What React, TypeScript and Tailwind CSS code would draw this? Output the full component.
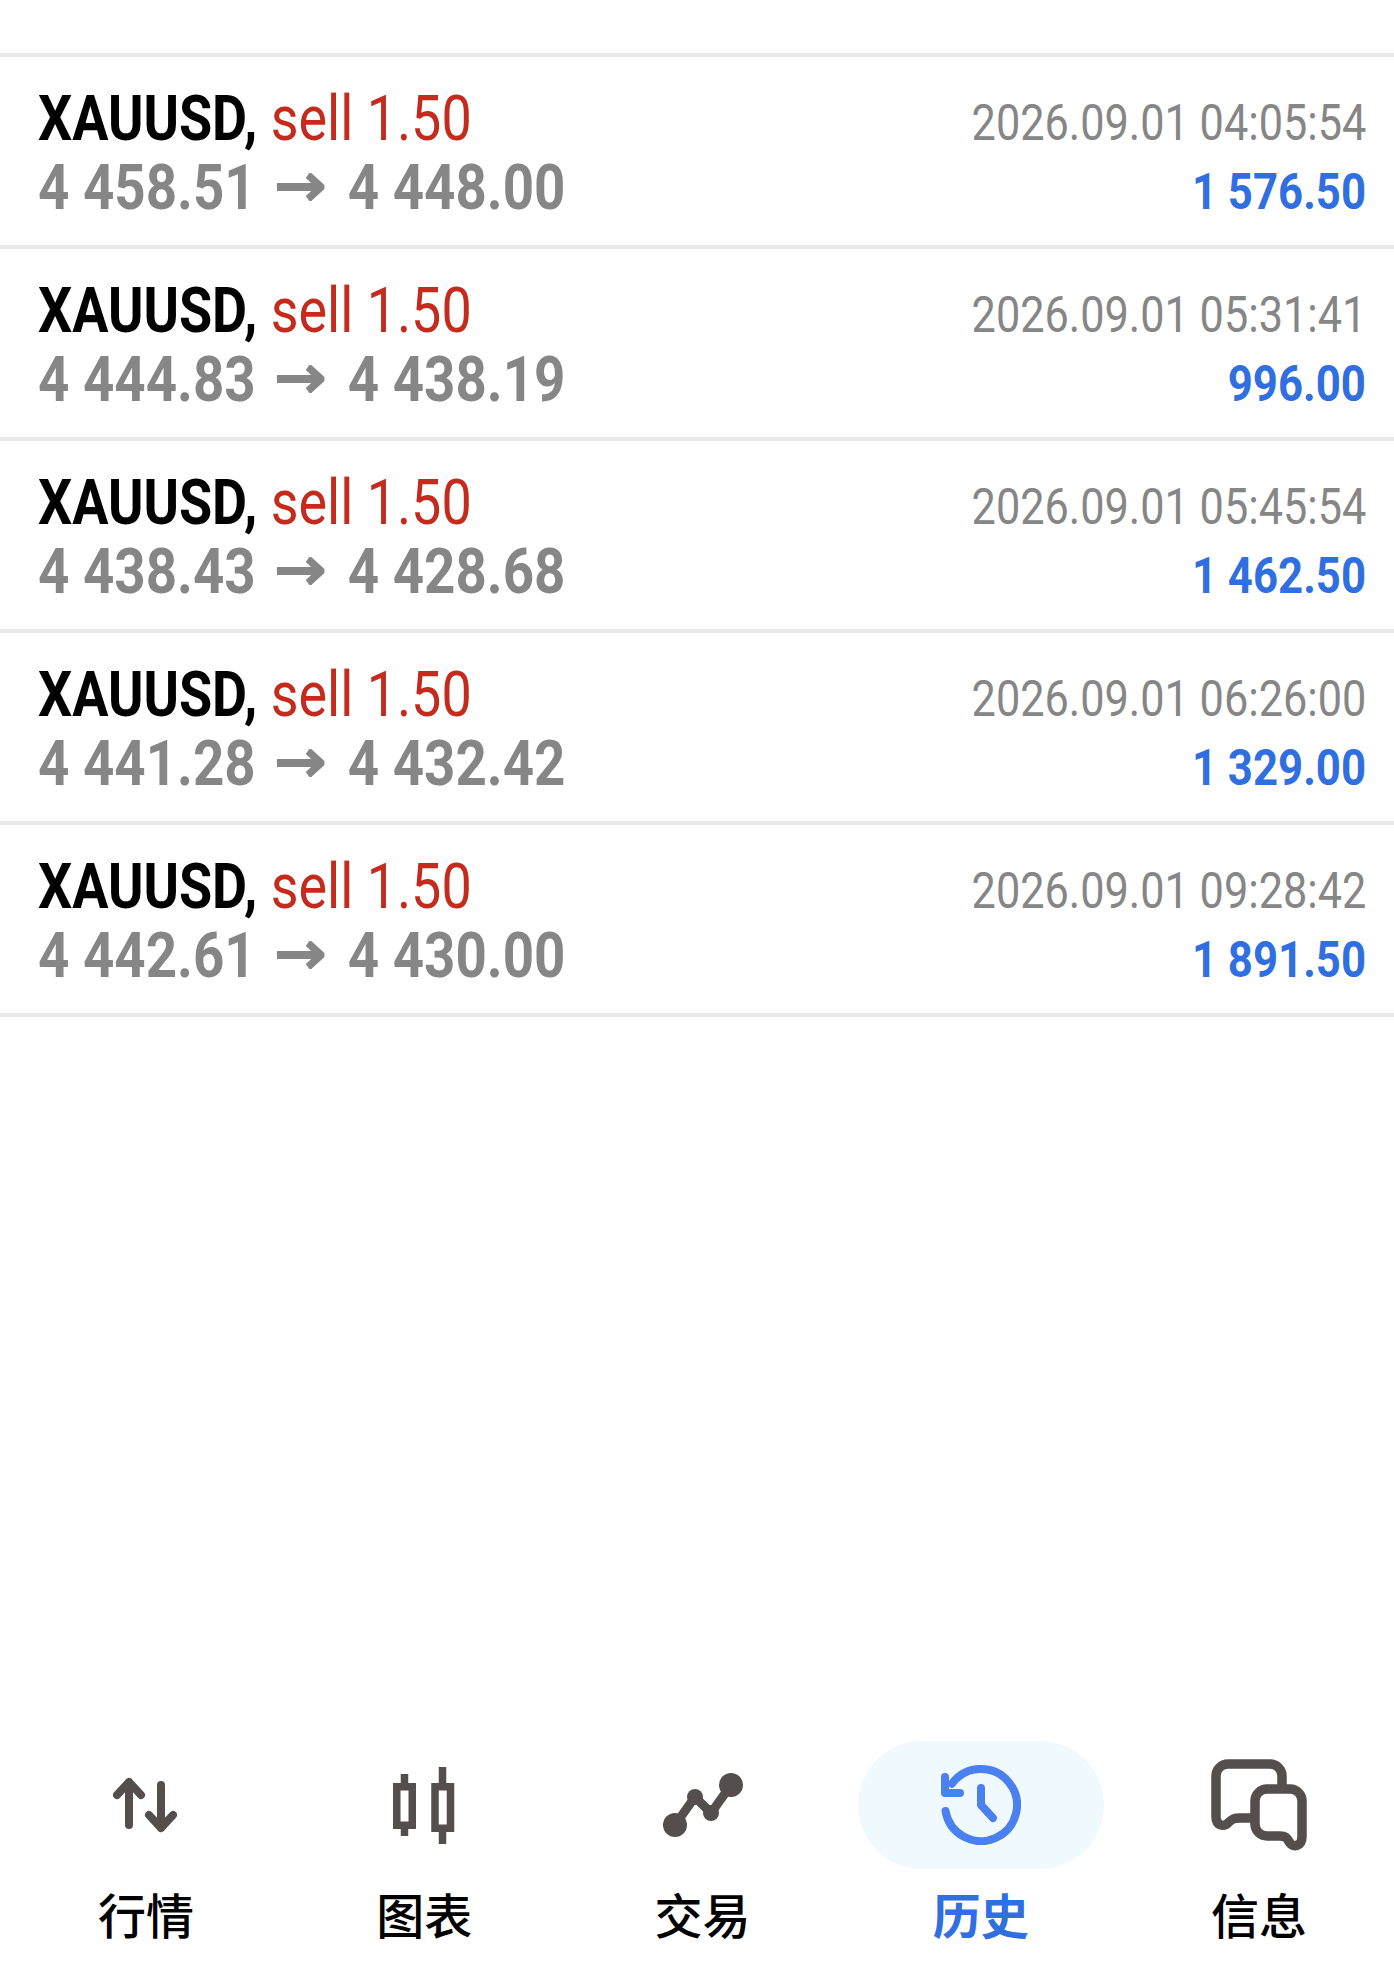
const trades = [
  { from: '4 458.51', to: '4 448.00', time: '2026.09.01 04:05:54', profit: '1 576.50' },
  { from: '4 444.83', to: '4 438.19', time: '2026.09.01 05:31:41', profit: '996.00' },
  { from: '4 438.43', to: '4 428.68', time: '2026.09.01 05:45:54', profit: '1 462.50' },
  { from: '4 441.28', to: '4 432.42', time: '2026.09.01 06:26:00', profit: '1 329.00' },
  { from: '4 442.61', to: '4 430.00', time: '2026.09.01 09:28:42', profit: '1 891.50' },
]

const ArrowGlyph = () => (
  <svg className="mr-[27px] ml-[24px] inline-block align-[8px]" width="55" height="28" viewBox="0 0 55 28" fill="none" stroke="#868686" strokeWidth="8">
    <path d="M0 14H49" />
    <path d="M36 2l15 12-15 12" />
  </svg>
)

const QuotesIcon = () => (
  <svg className="-ml-[2px]" width="64" height="56" viewBox="0 0 64 56" fill="none" stroke="#544f4d" strokeWidth="8" strokeLinecap="round" strokeLinejoin="round">
    <path d="M16 48V5M4 18L16 5l12 13" />
    <path d="M48 8v43M36 38l12 13 12-13" />
  </svg>
)

const ChartsIcon = () => (
  <svg width="62" height="77" viewBox="0 0 62 77" fill="none" stroke="#544f4d" strokeWidth="7.5">
    <path d="M11.5 7v9M11.5 62v7M49.5 0v16M49.5 65v12" />
    <rect x="3.75" y="19.75" width="15.5" height="38.5" />
    <rect x="42" y="19.75" width="15.5" height="41.5" />
  </svg>
)

const TradeIcon = () => (
  <svg className="ml-[2px]" width="80" height="64" viewBox="0 0 80 64" fill="#544f4d">
    <path d="M12 52L32 24l16 16 20-28" fill="none" stroke="#544f4d" strokeWidth="9" />
    <circle cx="12" cy="52" r="12" />
    <circle cx="32" cy="24" r="8" />
    <circle cx="48" cy="40" r="8" />
    <circle cx="68" cy="12" r="12" />
  </svg>
)

const HistoryIcon = () => (
  <svg width="80" height="80" viewBox="0 0 80 80" fill="none" stroke="#4a80f0" strokeWidth="8" strokeLinecap="round" strokeLinejoin="round">
    <path d="M11 18.7A36 36 0 1 1 4.5 46" />
    <path d="M4 12v16h15" />
    <path d="M40 23v17l12 13" />
  </svg>
)

const MessagesIcon = () => (
  <svg width="96" height="93" viewBox="0 0 96 93" fill="none" stroke="#544f4d" strokeWidth="9.5" strokeLinejoin="round">
    <path d="M71 30V17A12 12 0 0 0 59 5H17A12 12 0 0 0 5 17v41c0 9 8 10 12 6 4-4 6-5 12-5h12" />
    <path d="M56 30h23a12 12 0 0 1 12 12v36c0 9-9 11-12 6-3-4-3-7-10-7H56a12 12 0 0 1-12-12V42a12 12 0 0 1 12-12z" />
  </svg>
)

const tabs = [
  { label: '行情', icon: <QuotesIcon /> },
  { label: '图表', icon: <ChartsIcon /> },
  { label: '交易', icon: <TradeIcon /> },
  { label: '历史', icon: <HistoryIcon />, active: true },
  { label: '信息', icon: <MessagesIcon /> },
]

export default function App() {
  return (
    <div className="flex h-[1984px] flex-col overflow-hidden bg-white font-['Roboto',sans-serif]">
      <div className="mt-[53px] border-t-4 border-[#e8e8e8]">
        {trades.map((t) => (
          <div key={t.time} className="border-b-4 border-[#e8e8e8] pt-[27px] pb-[23px] pl-[38px] pr-[28px]">
            <div className="flex h-[69px] items-baseline justify-between">
              <div className="origin-left scale-x-[0.855] whitespace-nowrap text-[63px] leading-[69px]">
                <span className="font-bold text-black">XAUUSD,</span>{' '}
                <span className="text-[#c42b1c]">sell 1.50</span>
              </div>
              <div className="origin-right scale-x-[0.865] whitespace-nowrap text-[50px] leading-[69px] text-[#868686]">
                {t.time}
              </div>
            </div>
            <div className="flex h-[69px] items-baseline justify-between">
              <div className="origin-left scale-x-[0.868] whitespace-nowrap text-[63px] font-bold leading-[69px] text-[#868686]">
                {t.from}
                <ArrowGlyph />
                {t.to}
              </div>
              <div className="origin-right scale-x-[0.875] whitespace-nowrap text-[50px] font-bold leading-[69px] text-[#2f6fe0]">
                {t.profit}
              </div>
            </div>
          </div>
        ))}
      </div>
      <div className="mt-auto mb-[42px] ml-[7px] grid w-[1391px] grid-cols-5">
        {tabs.map((tab) => (
          <div key={tab.label} className="flex flex-col items-center">
            <div className={`flex h-[128px] w-[246px] items-center justify-center rounded-[64px] ${tab.active ? 'bg-[#f0f9fd]' : ''}`}>
              {tab.icon}
            </div>
            <div className={`mt-[16px] font-['Noto_Sans_CJK_SC',sans-serif] text-[48px] leading-[57px] ${tab.active ? 'font-bold text-[#2f6fe0]' : 'font-medium text-black'}`}>
              {tab.label}
            </div>
          </div>
        ))}
      </div>
    </div>
  )
}
